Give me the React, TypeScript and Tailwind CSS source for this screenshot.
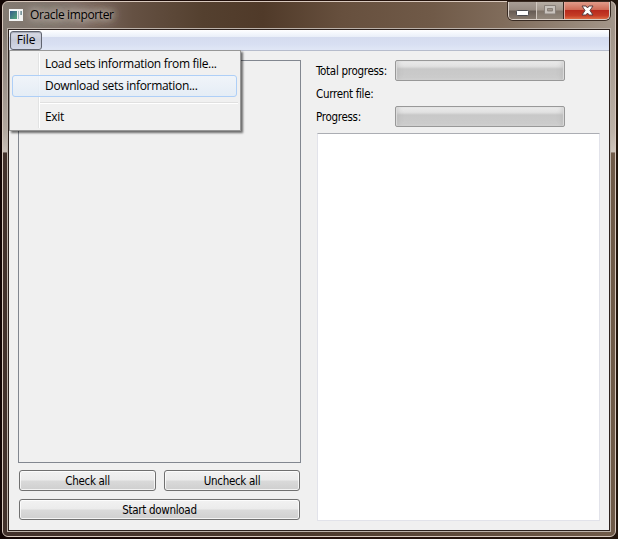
import type { ReactNode } from 'react';

const segoe = "font-['Open_Sans','Noto_Sans',sans-serif]";
const tahoma = "font-['DejaVu_Sans_Condensed','DejaVu_Sans',sans-serif] [font-stretch:condensed] text-[11.5px] tracking-[-0.3px]";

function PushButton({ className, children }: { className: string; children: ReactNode }) {
  return (
    <button
      className={`${className} ${tahoma} h-[21px] rounded-[3px] border border-[#707070] bg-[linear-gradient(#f2f2f2_0%,#ebebeb_49%,#dadada_51%,#cfcfcf_100%)] pt-px leading-[18px] text-black shadow-[inset_0_0_0_1px_rgba(255,255,255,0.75)]`}
    >
      {children}
    </button>
  );
}

function ProgressBar() {
  return (
    <div className="h-[21px] w-[170px] rounded-[2px] border border-[#989898] bg-[linear-gradient(#f3f3f3_0%,#dedede_30%,#c8c8c8_42%,#cacaca_75%,#d5d5d5_100%)] shadow-[inset_1px_0_1px_#ddd,inset_-1px_0_1px_#ddd,inset_4px_0_5px_-2px_rgba(150,150,150,0.35),inset_-4px_0_5px_-2px_rgba(150,150,150,0.35)]" />
  );
}

function AppIcon() {
  return (
    <svg width="14" height="12" viewBox="0 0 14 12">
      <defs>
        <linearGradient id="app" x1="0" y1="0" x2="1" y2="1">
          <stop offset="0" stopColor="#355c8c" />
          <stop offset="1" stopColor="#56a878" />
        </linearGradient>
      </defs>
      <rect width="14" height="12" fill="#f4f5f5" />
      <rect x="1" y="2" width="7" height="8" fill="url(#app)" />
      <rect x="9" y="2" width="1" height="8" fill="#aebfc5" />
      <rect x="11.5" y="2" width="1.2" height="4" fill="#48717c" />
    </svg>
  );
}

function WindowControls() {
  return (
    <div className="mr-[5px] flex h-[18px] w-[102px] overflow-hidden rounded-b-[5px] border border-t-0 border-[#d9cfc7] shadow-[0_0_0_1px_#382a22]">
      <div className="flex w-[28px] justify-center border-r border-[#d2c8c0] bg-[linear-gradient(#a89e96_0%,#968a81_48%,#655a52_52%,#84776c_100%)]">
        <svg width="13" height="7" viewBox="0 0 13 7" className="mt-[8px]">
          <rect x=".5" y=".5" width="12" height="5" rx="1" fill="#fff" stroke="#4b4b50" />
        </svg>
      </div>
      <div className="flex w-[27px] justify-center border-r border-[#382a22] bg-[linear-gradient(#b8afa6_0%,#a0958b_48%,#807469_52%,#93887c_100%)]">
        <svg width="12" height="10" viewBox="0 0 12 10" className="mt-[3px]">
          <path fill="#c9c3bd" stroke="#89817a" fillRule="evenodd" d="M.5 .5h11v8.500H.5zM3.500 3.500v2.500h5V3.500z" />
        </svg>
      </div>
      <div className="flex flex-1 justify-center border-l border-[#e5aaa0] bg-[linear-gradient(#e19c8a_0%,#ce6a55_46%,#b7291c_50%,#c53c25_80%,#dd6d45_100%)]">
        <svg width="13" height="11" viewBox="0 0 13 11" className="mt-[2.5px]">
          <path d="M1 1H5L6.500 3L8 1H12L9 5.500L12 10H8L6.500 8L5 10H1L4 5.500Z" fill="#fff" stroke="#593e40" strokeLinejoin="round" />
        </svg>
      </div>
    </div>
  );
}

function TitleBar() {
  return (
    <header className="flex h-[26px] items-start justify-between">
      <div className="flex items-center pl-[6px] pt-[3px]">
        <AppIcon />
        <span
          className={`${segoe} ml-[7px] whitespace-nowrap text-[12px] leading-[20px] tracking-[-0.36px] text-black [text-shadow:0_0_6px_#cfc5bd,0_0_10px_#c4bab2,0_0_12px_#c4bab2,0_0_16px_#a99e96]`}
        >
          Oracle importer
        </span>
      </div>
      <WindowControls />
    </header>
  );
}

function FileMenu() {
  return (
    <div
      className={`${segoe} absolute left-0 top-[20px] flex h-[81px] w-[232px] flex-col border border-[#979797] bg-[#f0f0f0] p-[2px] text-[12px] tracking-[-0.31px] text-black shadow-[2px_2px_2px_rgba(0,0,0,0.55)]`}
    >
      <div className="absolute bottom-[2px] left-[28px] top-[2px] w-[2px] border-l border-[#e2e3e3] bg-white" />
      <div className="relative h-[22px] whitespace-nowrap pl-[33px] leading-[21px]">Load sets information from file...</div>
      <div className="relative h-[22px] w-[225px] whitespace-nowrap rounded-[3px] border border-[#aecff7] bg-[linear-gradient(rgba(240,245,251,0.8),rgba(226,236,247,0.8))] pl-[32px] leading-[20px]">
        Download sets information...
      </div>
      <div className="relative ml-[28px] mt-[5px] h-[2px] border-t border-[#e0e0e0] bg-white" />
      <div className="relative h-[22px] pl-[33px] pt-[2px] leading-[21px]">Exit</div>
    </div>
  );
}

function MenuBar() {
  return (
    <nav className="relative z-10 h-[21px] border-b border-[#b6bccc] bg-[linear-gradient(#fff_0px,#f5f8fd_3px,#e9eef8_7px,#d5dcef_7px,#d8dff2_14px,#e1e7f6_20px)] pl-px pt-px">
      <div
        className={`${segoe} h-[19px] w-[32px] rounded-[3px] border border-[#60646f] bg-[linear-gradient(#d9dce5,#c5cad8_50%,#d3d9e8)] text-center text-[12px] leading-[16px] tracking-[-0.1px] text-black shadow-[inset_0_1px_1px_#a2a7b4]`}
      >
        File
      </div>
      <FileMenu />
    </nav>
  );
}

export default function App() {
  return (
    <div className="h-[539px] w-[618px] overflow-hidden bg-[linear-gradient(90deg,#120504,#25120c_50%,#22150c)] pl-[2px] pt-px">
      <div className="h-[536px] w-[614px] rounded-[6px] border border-[#d8c8bd] bg-[linear-gradient(90deg,#837a72_0px,#807068_70px,#655143_130px,#54402f_200px,#503a29_260px,#67503e_340px,#705a48_430px,#806c5b_500px,#a3968a_612px)]">
        <div className="h-[534px] rounded-[5px] bg-[linear-gradient(90deg,#42312b_0px,#4b392c_306px,#705b49_612px)] bg-[length:100%_384px] bg-bottom bg-no-repeat">
          <div className="h-[534px] rounded-[5px] bg-[linear-gradient(transparent_0px,transparent_30px,rgba(205,194,184,0.65)_130px,rgba(218,208,200,0.8)_150px,transparent_151px)]">
            <TitleBar />
            <main className="mx-[4px] h-[504px] border border-[#bcb2aa]">
              <div className="flex h-[502px] flex-col border border-[#2c211d] bg-[#f0f0f0]">
                <MenuBar />
                <div className="flex pl-[9px] pt-[9px]">
                  <section className="w-[283px]">
                    <div className="h-[403px] border border-[#828790]" />
                    <div className="ml-px mt-[7px] flex gap-[8px]">
                      <PushButton className="w-[137px]">Check all</PushButton>
                      <PushButton className="w-[136px]">Uncheck all</PushButton>
                    </div>
                    <PushButton className="ml-px mt-[8px] block w-[281px]">Start download</PushButton>
                  </section>
                  <section className="ml-[15px] w-[284px]">
                    <div className={`${tahoma} grid grid-cols-[79px_170px] grid-rows-[21px_25px_21px] items-center text-black`}>
                      <span className="whitespace-nowrap pt-[2px]">Total progress:</span>
                      <ProgressBar />
                      <span className="col-span-2 pt-[2px]">Current file:</span>
                      <span className="pt-[2px]">Progress:</span>
                      <ProgressBar />
                    </div>
                    <div className="ml-px mt-[6px] h-[388px] w-[283px] border border-[#e2e3ea] border-t-[#abadb3] bg-white" />
                  </section>
                </div>
              </div>
            </main>
          </div>
        </div>
      </div>
    </div>
  );
}
